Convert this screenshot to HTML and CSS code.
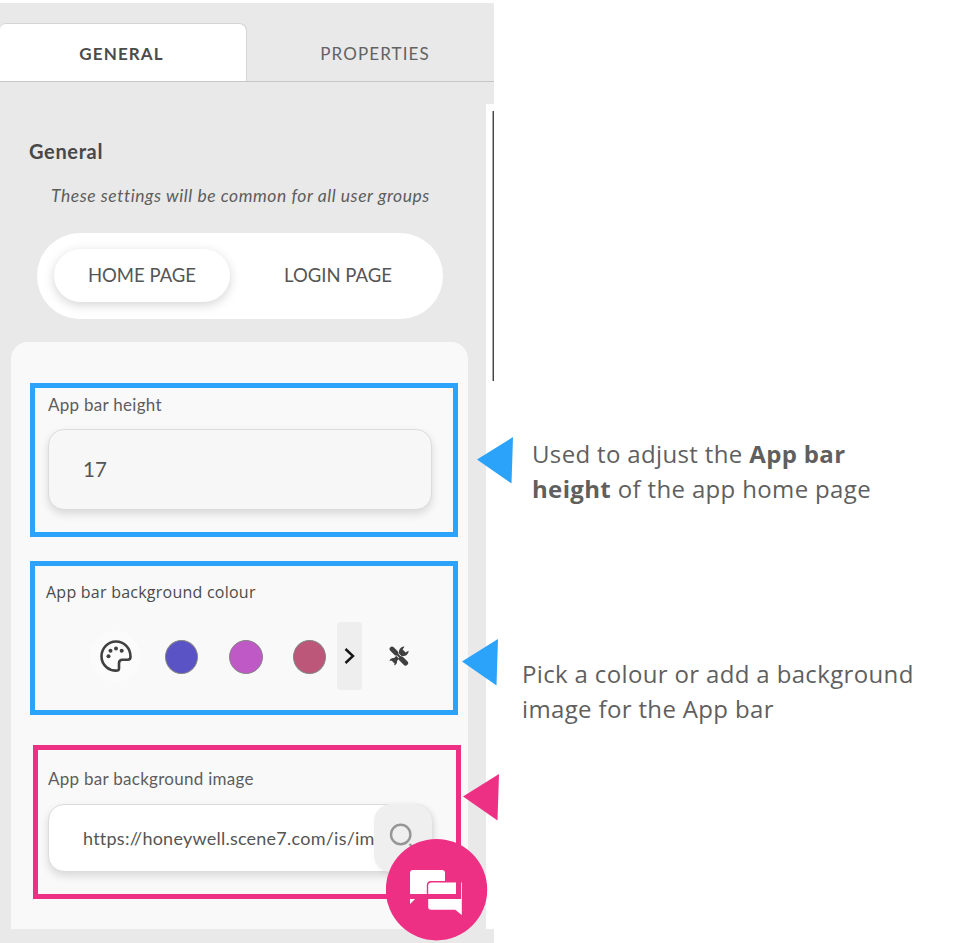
FILE: index.html
```html
<!DOCTYPE html>
<html lang="en">
<head>
<meta charset="utf-8">
<title>App bar settings</title>
<link rel="stylesheet" href="styles.css">
</head>
<body>
<main class="page">
  <section class="panel">
    <nav class="tabs">
      <div class="tab tab-active"><span class="t-general">GENERAL</span></div>
      <div class="tab"><span class="t-properties">PROPERTIES</span></div>
    </nav>
    <div class="panel-body">
      <div class="settings">
        <h1 class="title">General</h1>
        <p class="hint">These settings will be common for all user groups</p>
        <div class="switch">
          <div class="option option-active">HOME PAGE</div>
          <div class="option">LOGIN PAGE</div>
        </div>
        <div class="card">
          <div class="frame">
            <label class="label l-height">App bar height</label>
            <div class="input input-height">17</div>
            <svg class="arrow arrow-1" width="36" height="48" viewBox="0 0 36 48"><path d="M0 23.5 36 1 34.5 47.5z" fill="#2ba3fb"/></svg>
          </div>
          <div class="frame frame-colour">
            <label class="label l-colour">App bar background colour</label>
            <div class="colours">
              <div class="palette">
                <svg width="32" height="32" viewBox="0 0 32 32"><path d="M17.500 30.500C9.500 31.300 1.500 25.500 1.500 16.300 1.500 8.200 8 1.500 16 1.500c8.200 0 14.500 6.600 14.500 15.200 0 2.200-1 3-2.800 3h-5.200c-2.600 0-3.500 1-3.500 3.500v5.300c0 1.200-.5 1.900-1.500 2z" fill="none" stroke="#404040" stroke-width="2.600"/><g fill="#404040"><circle cx="8.500" cy="16.300" r="2"/><circle cx="10.500" cy="10.700" r="2"/><circle cx="16" cy="8.500" r="2"/><circle cx="21.700" cy="10.700" r="2"/></g></svg>
              </div>
              <i class="swatch indigo"></i>
              <i class="swatch orchid"></i>
              <i class="swatch rose"></i>
              <div class="next"><svg width="12" height="18" viewBox="0 0 12 18"><path d="m1.500 2 7.500 7-7.500 7" fill="none" stroke="#151515" stroke-width="2.400"/></svg></div>
              <svg class="tools" width="20" height="20" viewBox="0 0 20 20"><path d="M4 16 15 5" stroke="#404040" stroke-width="4"/><path d="m6 6 8 8" stroke="#f9f9f9" stroke-width="3.600"/><path d="m6 6 8 8" stroke="#404040" stroke-width="2"/><path d="m3 3 4 4" stroke="#404040" stroke-width="4.800" stroke-linecap="round"/><path d="m12.500 13 4 4" stroke="#404040" stroke-width="5.200" stroke-linecap="round"/><path d="M15.500.6A5 5 0 0 0 10.200 7l2.800 2.800a5 5 0 0 0 6.600-5l-3.200 1.700-2.900-2.700zM.4 14.800a4 4 0 0 1 6-2l1.300 1.400a4 4 0 0 1-2.600 5.400l.6-2.600-1.900-2.200z" fill="#404040"/></svg>
            </div>
            <svg class="arrow arrow-2" width="36" height="48" viewBox="0 0 36 48"><path d="M0 23.500 36 1 34.500 47.500z" fill="#2ba3fb"/></svg>
          </div>
          <div class="frame frame-image">
            <label class="label l-image">App bar background image</label>
            <div class="input input-url">
              <span class="url">https://honeywell.scene7.com/is/im</span>
              <div class="search"><svg width="26" height="26" viewBox="0 0 26 26"><circle cx="11.700" cy="11.500" r="9.700" fill="none" stroke="#969696" stroke-width="2.400"/><path d="m20.500 21 4 4" stroke="#969696" stroke-width="2.400"/></svg></div>
            </div>
            <svg class="arrow arrow-3" width="36" height="48" viewBox="0 0 36 48"><path d="M0 23.500 36 1 34.500 47.500z" fill="#ee3084"/></svg>
            <svg class="chat" width="102" height="102" viewBox="0 0 102 102"><circle cx="50.500" cy="50.700" r="50.700" fill="#ee3084"/><path d="M27 31h29a3 3 0 0 1 3 3v24H31l-7 7V34a3 3 0 0 1 3-3z" fill="#fff"/><path d="M45 42.800h31.500V77.500l-7.500-6H45a3.500 3.500 0 0 1-3.500-3.500V46a3.500 3.500 0 0 1 3.500-3.200z" fill="#fff" stroke="#ee3084" stroke-width="1.400"/><path d="M24 55h46V43h5v17H24z" fill="#ee3084"/></svg>
          </div>
        </div>
      </div>
      <div class="gutter"><div class="rule"></div></div>
    </div>
  </section>
  <aside class="notes">
    <p class="note note-height">Used to adjust the <b>App bar</b><br><b>height</b> of the app home page</p>
    <p class="note note-colour">Pick a colour or add a background<br>image for the App bar</p>
  </aside>
</main>
</body>
</html>
```
FILE: styles.css
```css
* { box-sizing: border-box; }
body { margin: 0; background: #fff; color: #4b4b4b; font-family: Lato, "Open Sans", sans-serif; }
.page { display: flex; width: 956px; height: 943px; overflow: hidden; }
.panel { width: 494px; height: 940px; margin-top: 3px; background: #e9e9e9; flex: none; }
.tabs { display: flex; height: 79px; padding-top: 20px; border-bottom: 1px solid #c6c6c6; }
.tab { width: 247px; height: 58px; display: flex; align-items: center; justify-content: center; padding-top: 2px; font-size: 17px; color: #626262; white-space: nowrap; }
.tab-active { background: #fff; border: solid #d4d4d4; border-width: 1px 1px 0 0; border-radius: 6px 8px 0 0; font-weight: bold; color: #4b4b4b; }
.t-general { letter-spacing: 1.1px; margin-right: 3px; }
.t-properties { letter-spacing: 1.1px; margin-left: 9px; }
.panel-body { display: flex; height: 847px; }
.settings { width: 486px; flex: none; padding-top: 57px; }
.title { margin: 0 0 0 29px; font-size: 20px; line-height: 24px; color: #484848; letter-spacing: .65px; }
.hint { margin: 22px 0 0 51px; font-size: 17.5px; line-height: 22px; font-style: italic; white-space: nowrap; color: #5d5d5d; letter-spacing: .54px; }
.switch { display: flex; width: 406px; height: 86px; margin: 26px 0 0 37px; padding: 16px 17px; gap: 20px; background: #fff; border-radius: 43px; }
.option { width: 176px; height: 53px; display: flex; align-items: center; justify-content: center; padding-bottom: 2px; font-size: 18.5px; white-space: nowrap; color: #555; }
.option-active { border-radius: 27px; background: #fff; box-shadow: 0 3px 11px rgba(0,0,0,.17); }
.card { width: 457px; height: 587px; margin: 23px 0 0 11px; padding: 41px 0 0 19px; background: #f9f9f9; border-radius: 17px 17px 0 0; }
.frame { position: relative; width: 428px; height: 154px; border: 5px solid #2ba3fb; padding: 7px 0 0 13px; }
.frame-colour { margin-top: 24px; padding: 11px 0 0 11px; }
.frame-image { margin: 30px 0 0 3px; padding: 19px 0 0 10px; border-color: #ee3084; }
.label { display: block; font-size: 17px; line-height: 20px; white-space: nowrap; color: #5d5d5d; }
.l-height { letter-spacing: .28px; }
.l-image { letter-spacing: .28px; }
.l-colour { margin-top: 5px; font: 16px/20px "Open Sans", sans-serif; letter-spacing: .24px; color: #4b4b4b; }
.input { display: flex; align-items: center; width: 384px; border: 1px solid #dcdcdc; border-radius: 16px; box-shadow: 0 4px 9px rgba(0,0,0,.13); }
.input-height { height: 81px; margin-top: 14px; padding: 0 0 2px 34px; background: #f7f7f7; font-size: 20.5px; color: #555; }
.input-url { height: 68px; margin-top: 15px; padding-left: 34px; background: #fff; font-size: 18px; }
.url { width: 291px; flex: none; overflow: hidden; white-space: nowrap; color: #555; letter-spacing: .24px; }
.search { flex: none; width: 58px; height: 68px; padding: 19px 0 0 15px; background: #efefef; border-radius: 17px; box-shadow: 2px 2px 6px rgba(0,0,0,.06); }
.colours { display: flex; align-items: center; height: 68px; margin: 20px 0 0 44px; }
.palette { width: 51px; height: 51px; border-radius: 50%; background: #fbfbfb; display: flex; align-items: center; justify-content: center; margin-right: 24px; }
.swatch { width: 33px; height: 34px; border: 1.5px solid #858585; border-radius: 50%; flex: none; margin-top: 1px; }
.indigo { background: #5953c6; margin-right: 31px; }
.orchid { background: #bf59c5; width: 34px; margin-right: 30px; }
.rose { background: #bd5779; margin-right: 11px; }
.next { width: 25px; height: 68px; background: #eee; border-radius: 3px; display: flex; align-items: center; justify-content: center; margin-right: 27px; }
.arrow { position: absolute; }
.arrow-1 { left: 442px; top: 48px; }
.arrow-2 { left: 427px; top: 72px; }
.arrow-3 { left: 425px; top: 23px; }
.chat { position: absolute; left: 348px; top: 89px; }
.gutter { display: flex; width: 8px; height: 825px; margin-top: 22px; background: #fff; }
.rule { width: 2px; height: 270px; margin: 7px 0 0 6px; border-left: 1px solid #aaa; background: #444; }
.notes { padding-left: 28px; font-family: "Open Sans", sans-serif; color: #5f5f5f; }
.note { margin: 0; font-size: 24px; line-height: 35px; white-space: nowrap; letter-spacing: .35px; }
.note-height { margin: 436px 0 0 10px; }
.note-colour { margin-top: 150px; }
```
